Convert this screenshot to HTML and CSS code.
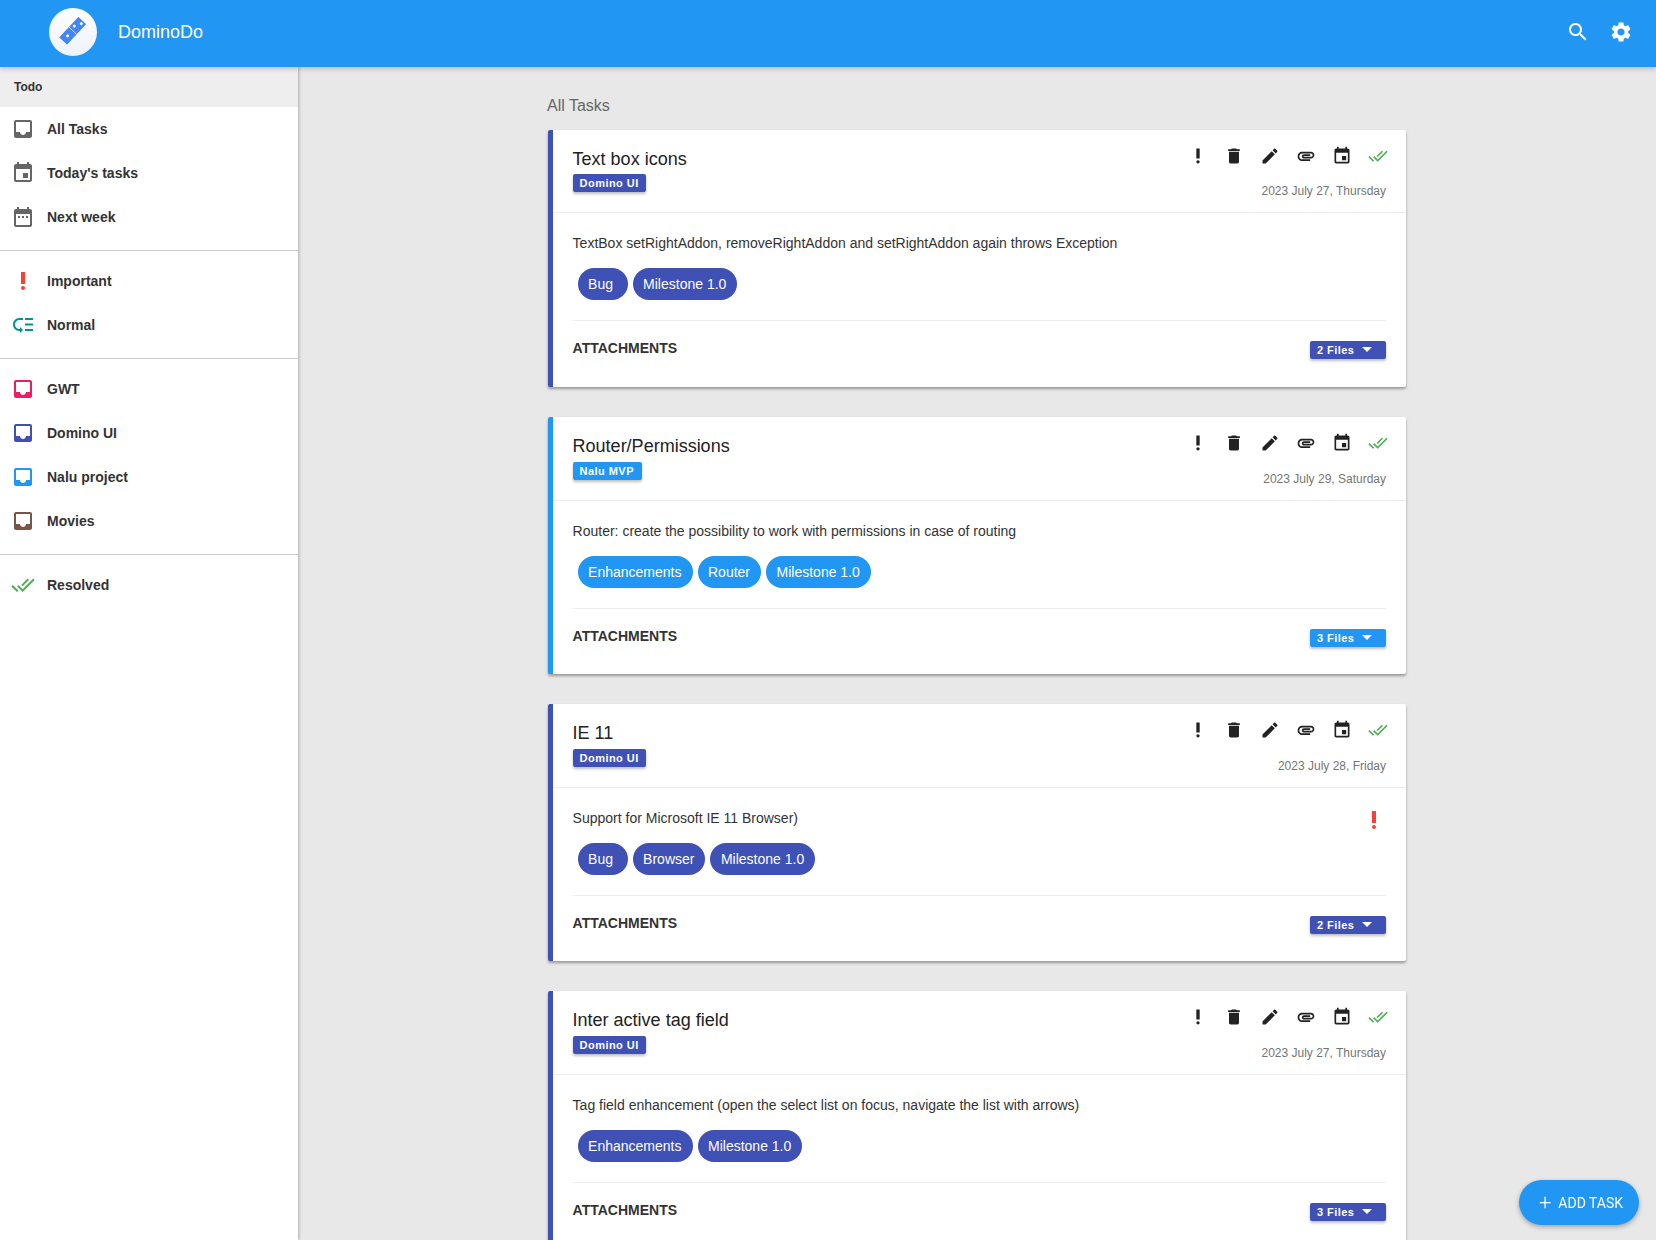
FILE: index.html
```html
<!DOCTYPE html>
<html lang="en">
<head>
  <meta charset="UTF-8">
  <meta name="viewport" content="width=device-width, initial-scale=1.0">
  <title>DominoDo</title>
  <link rel="stylesheet" href="styles.css">
</head>
<body>

  <svg class="icon-defs" aria-hidden="true">
    <symbol id="i-inbox" viewBox="0 0 24 24"><path d="M19 3H4.99c-1.11 0-1.98.89-1.98 2L3 19c0 1.1.88 2 1.99 2H19c1.1 0 2-.9 2-2V5c0-1.11-.9-2-2-2zm0 12h-4c0 1.66-1.35 3-3 3s-3-1.34-3-3H4.99V5H19v10z"/></symbol>
    <symbol id="i-event" viewBox="0 0 24 24"><path d="M17 12h-5v5h5v-5zM16 1v2H8V1H6v2H5c-1.11 0-1.99.9-1.99 2L3 19c0 1.1.89 2 2 2h14c1.1 0 2-.9 2-2V5c0-1.1-.9-2-2-2h-1V1h-2zm3 18H5V8h14v11z"/></symbol>
    <symbol id="i-range" viewBox="0 0 24 24"><path d="M9 11H7v2h2v-2zm4 0h-2v2h2v-2zm4 0h-2v2h2v-2zm2-7h-1V2h-2v2H8V2H6v2H5c-1.11 0-1.99.9-1.99 2L3 20c0 1.1.89 2 2 2h14c1.1 0 2-.9 2-2V6c0-1.1-.9-2-2-2zm0 16H5V9h14v11z"/></symbol>
    <symbol id="i-priority" viewBox="0 0 24 24"><circle cx="12" cy="19" r="2"/><path d="M10 3h4v12h-4z"/></symbol>
    <symbol id="i-low" viewBox="0 0 24 24"><path d="M14 5h8v2h-8zm0 5.5h8v2h-8zm0 5.5h8v2h-8zM2 11.5C2 15.08 4.92 18 8.5 18H9v2l3-3-3-3v2h-.5C6.02 16 4 13.98 4 11.5S6.02 7 8.5 7H12V5H8.5C4.92 5 2 7.92 2 11.5z"/></symbol>
    <symbol id="i-done" viewBox="0 0 24 24"><path d="M18 7l-1.41-1.41-6.34 6.34 1.41 1.41L18 7zm4.24-1.41L11.66 16.17 7.48 12l-1.41 1.41L11.66 19l12-12-1.42-1.41zM.41 13.41L6 19l1.41-1.41L1.83 12 .41 13.41z"/></symbol>
    <symbol id="i-delete" viewBox="0 0 24 24"><path d="M6 19c0 1.1.9 2 2 2h8c1.1 0 2-.9 2-2V7H6v12zM19 4h-3.5l-1-1h-5l-1 1H5v2h14V4z"/></symbol>
    <symbol id="i-edit" viewBox="0 0 24 24"><path d="M3 17.25V21h3.75L17.81 9.94l-3.75-3.75L3 17.25zM20.71 7.04c.39-.39.39-1.02 0-1.41l-2.34-2.34c-.39-.39-1.02-.39-1.41 0l-1.83 1.83 3.75 3.75 1.83-1.83z"/></symbol>
    <symbol id="i-attach" viewBox="0 0 24 24"><path d="M2 12.5C2 9.46 4.46 7 7.5 7H18c2.21 0 4 1.79 4 4s-1.79 4-4 4H9.5C8.12 15 7 13.88 7 12.5S8.12 10 9.5 10H17v2H9.41c-.55 0-.55 1 0 1H18c1.1 0 2-.9 2-2s-.9-2-2-2H7.5C5.57 9 4 10.57 4 12.5S5.57 16 7.5 16H17v2H7.5C4.46 18 2 15.54 2 12.5z"/></symbol>
    <symbol id="i-search" viewBox="0 0 24 24"><path d="M15.5 14h-.79l-.28-.27C15.41 12.59 16 11.11 16 9.5 16 5.91 13.09 3 9.5 3S3 5.91 3 9.5 5.91 16 9.5 16c1.61 0 3.09-.59 4.23-1.57l.27.28v.79l5 4.99L20.49 19l-4.99-5zm-6 0C7.01 14 5 11.99 5 9.5S7.01 5 9.5 5 14 7.01 14 9.5 11.99 14 9.5 14z"/></symbol>
    <symbol id="i-settings" viewBox="0 0 24 24"><path d="M19.14 12.94c.04-.3.06-.61.06-.94 0-.32-.02-.64-.07-.94l2.03-1.58c.18-.14.23-.41.12-.61l-1.92-3.32c-.12-.22-.37-.29-.59-.22l-2.39.96c-.5-.38-1.03-.7-1.62-.94l-.36-2.54c-.04-.24-.24-.41-.48-.41h-3.84c-.24 0-.43.17-.47.41l-.36 2.54c-.59.24-1.13.57-1.62.94l-2.39-.96c-.22-.08-.47 0-.59.22L2.74 8.87c-.12.21-.08.47.12.61l2.03 1.58c-.05.3-.09.63-.09.94s.02.64.07.94l-2.03 1.58c-.18.14-.23.41-.12.61l1.92 3.32c.12.22.37.29.59.22l2.39-.96c.5.38 1.03.7 1.62.94l.36 2.54c.05.24.24.41.48.41h3.84c.24 0 .44-.17.47-.41l.36-2.54c.59-.24 1.13-.56 1.62-.94l2.39.96c.22.08.47 0 .59-.22l1.92-3.32c.12-.22.07-.47-.12-.61l-2.01-1.58zM12 15.6c-1.98 0-3.6-1.62-3.6-3.6s1.62-3.6 3.6-3.6 3.6 1.62 3.6 3.6-1.62 3.6-3.6 3.6z"/></symbol>
  </svg>

  <header class="topbar">
    <div class="logo">
      <svg width="32" height="32" viewBox="0 0 32 32">
        <g transform="translate(-0.3 -1.3) rotate(-47 16 16)">
          <rect x="2" y="10.7" width="28" height="10.6" rx="0.5" fill="#4285f4"/>
          <rect x="15.7" y="10.7" width="0.6" height="10.6" fill="#dbe6fb"/>
          <circle cx="8.8" cy="15.8" r="1.5" fill="#fff"/>
          <circle cx="20.5" cy="14" r="1.5" fill="#fff"/>
          <circle cx="27" cy="17.5" r="1.5" fill="#fff"/>
        </g>
      </svg>
    </div>
    <div class="brand">DominoDo</div>
    <div class="topbar-actions">
      <svg class="icon white"><use href="#i-search"/></svg>
      <svg class="icon white"><use href="#i-settings"/></svg>
    </div>
  </header>

  <div class="layout">
    <nav class="sidebar">
      <div class="menu-title">Todo</div>
      <ul class="menu">
        <li><svg class="icon grey"><use href="#i-inbox"/></svg>All Tasks</li>
        <li><svg class="icon grey"><use href="#i-event"/></svg>Today's tasks</li>
        <li><svg class="icon grey"><use href="#i-range"/></svg>Next week</li>
      </ul>
      <ul class="menu">
        <li><svg class="icon red"><use href="#i-priority"/></svg>Important</li>
        <li><svg class="icon teal"><use href="#i-low"/></svg>Normal</li>
      </ul>
      <ul class="menu">
        <li><svg class="icon pink"><use href="#i-inbox"/></svg>GWT</li>
        <li><svg class="icon indigo"><use href="#i-inbox"/></svg>Domino UI</li>
        <li><svg class="icon blue"><use href="#i-inbox"/></svg>Nalu project</li>
        <li><svg class="icon brown"><use href="#i-inbox"/></svg>Movies</li>
      </ul>
      <ul class="menu menu-last">
        <li><svg class="icon green"><use href="#i-done"/></svg>Resolved</li>
      </ul>
    </nav>

    <main class="content">
      <div class="tasks">
        <div class="page-title">All Tasks</div>

        <div class="card indigo-card">
          <div class="card-head">
            <div>
              <div class="card-title">Text box icons</div>
              <span class="project">Domino UI</span>
            </div>
            <div class="card-meta">
              <div class="actions">
                <svg class="action dark"><use href="#i-priority"/></svg>
                <svg class="action dark"><use href="#i-delete"/></svg>
                <svg class="action dark"><use href="#i-edit"/></svg>
                <svg class="action dark"><use href="#i-attach"/></svg>
                <svg class="action dark"><use href="#i-event"/></svg>
                <svg class="action green"><use href="#i-done"/></svg>
              </div>
              <div class="due">2023 July 27, Thursday</div>
            </div>
          </div>
          <div class="card-body">
            <div class="desc">TextBox setRightAddon, removeRightAddon and setRightAddon again throws Exception</div>
            <div class="chips">
              <span class="chip">Bug</span>
              <span class="chip">Milestone 1.0</span>
            </div>
            <div class="attachments">
              <span>ATTACHMENTS</span>
              <span class="files">2 Files <i class="caret"></i></span>
            </div>
          </div>
        </div>

        <div class="card blue-card">
          <div class="card-head">
            <div>
              <div class="card-title">Router/Permissions</div>
              <span class="project">Nalu MVP</span>
            </div>
            <div class="card-meta">
              <div class="actions">
                <svg class="action dark"><use href="#i-priority"/></svg>
                <svg class="action dark"><use href="#i-delete"/></svg>
                <svg class="action dark"><use href="#i-edit"/></svg>
                <svg class="action dark"><use href="#i-attach"/></svg>
                <svg class="action dark"><use href="#i-event"/></svg>
                <svg class="action green"><use href="#i-done"/></svg>
              </div>
              <div class="due">2023 July 29, Saturday</div>
            </div>
          </div>
          <div class="card-body">
            <div class="desc">Router: create the possibility to work with permissions in case of routing</div>
            <div class="chips">
              <span class="chip">Enhancements</span>
              <span class="chip">Router</span>
              <span class="chip">Milestone 1.0</span>
            </div>
            <div class="attachments">
              <span>ATTACHMENTS</span>
              <span class="files">3 Files <i class="caret"></i></span>
            </div>
          </div>
        </div>

        <div class="card indigo-card">
          <div class="card-head">
            <div>
              <div class="card-title">IE 11</div>
              <span class="project">Domino UI</span>
            </div>
            <div class="card-meta">
              <div class="actions">
                <svg class="action dark"><use href="#i-priority"/></svg>
                <svg class="action dark"><use href="#i-delete"/></svg>
                <svg class="action dark"><use href="#i-edit"/></svg>
                <svg class="action dark"><use href="#i-attach"/></svg>
                <svg class="action dark"><use href="#i-event"/></svg>
                <svg class="action green"><use href="#i-done"/></svg>
              </div>
              <div class="due">2023 July 28, Friday</div>
            </div>
          </div>
          <div class="card-body">
            <div class="desc">Support for Microsoft IE 11 Browser)<svg class="icon red flag"><use href="#i-priority"/></svg></div>
            <div class="chips">
              <span class="chip">Bug</span>
              <span class="chip">Browser</span>
              <span class="chip">Milestone 1.0</span>
            </div>
            <div class="attachments">
              <span>ATTACHMENTS</span>
              <span class="files">2 Files <i class="caret"></i></span>
            </div>
          </div>
        </div>

        <div class="card indigo-card">
          <div class="card-head">
            <div>
              <div class="card-title">Inter active tag field</div>
              <span class="project">Domino UI</span>
            </div>
            <div class="card-meta">
              <div class="actions">
                <svg class="action dark"><use href="#i-priority"/></svg>
                <svg class="action dark"><use href="#i-delete"/></svg>
                <svg class="action dark"><use href="#i-edit"/></svg>
                <svg class="action dark"><use href="#i-attach"/></svg>
                <svg class="action dark"><use href="#i-event"/></svg>
                <svg class="action green"><use href="#i-done"/></svg>
              </div>
              <div class="due">2023 July 27, Thursday</div>
            </div>
          </div>
          <div class="card-body">
            <div class="desc">Tag field enhancement (open the select list on focus, navigate the list with arrows)</div>
            <div class="chips">
              <span class="chip">Enhancements</span>
              <span class="chip">Milestone 1.0</span>
            </div>
            <div class="attachments">
              <span>ATTACHMENTS</span>
              <span class="files">3 Files <i class="caret"></i></span>
            </div>
          </div>
        </div>
      </div>
    </main>
  </div>

  <button class="fab"><span class="fab-plus">+</span>ADD TASK</button>

</body>
</html>
```

FILE: styles.css
```css
* {
  box-sizing: border-box;
}

body {
  font-family: "Liberation Sans", Arial, sans-serif;
  background-color: #e8e8e8;
  color: #333;
  margin: 0;
  height: 100vh;
  overflow: hidden;
  display: flex;
  flex-direction: column;
}

.icon-defs {
  display: none;
}

.icon {
  width: 24px;
  height: 24px;
  flex: none;
  fill: currentColor;
}

.white { color: #fff; }
.grey { color: #666; }
.dark { color: #222; }
.red { color: #f44336; }
.teal { color: #009688; }
.pink { color: #e91e63; }
.indigo { color: #3f51b5; }
.blue { color: #2196f3; }
.brown { color: #795548; }
.green { color: #4caf50; }

/* top bar */
.topbar {
  height: 67px;
  flex: none;
  background-color: #2196f3;
  color: #fff;
  display: flex;
  align-items: center;
  padding: 0 0 3px 49px;
  position: relative;
  z-index: 2;
  box-shadow: 0 2px 5px rgba(0, 0, 0, 0.2);
}

.logo {
  width: 48px;
  height: 48px;
  border-radius: 50%;
  background: linear-gradient(#fff, #eef2fa);
  display: flex;
  align-items: center;
  justify-content: center;
}

.brand {
  font-size: 18px;
  margin-left: 21px;
}

.topbar-actions {
  margin-left: auto;
  margin-right: 23px;
  display: flex;
  gap: 19px;
}

/* sidebar */
.layout {
  flex: 1;
  display: flex;
  min-height: 0;
}

.sidebar {
  width: 298px;
  flex: none;
  background-color: #fff;
  box-shadow: 1px 0 3px rgba(0, 0, 0, 0.25);
  position: relative;
  z-index: 1;
}

.menu-title {
  height: 40px;
  line-height: 40px;
  padding-left: 14px;
  font-size: 12px;
  font-weight: bold;
  background-color: #eee;
}

.menu {
  list-style: none;
  margin: 0;
  padding: 0 0 11px;
  border-bottom: 1px solid #ccc;
}

.menu + .menu {
  padding-top: 8px;
}

.menu-last {
  border-bottom: none;
}

.menu li {
  height: 44px;
  display: flex;
  align-items: center;
  padding-left: 11px;
  gap: 12px;
  font-size: 14px;
  font-weight: bold;
}

/* task list */
.content {
  flex: 1;
  min-width: 0;
}

.tasks {
  width: 858px;
  margin: 0 auto;
}

.page-title {
  height: 63px;
  padding-top: 29px;
  margin-left: -1px;
  font-size: 16px;
  line-height: 19px;
  color: #666;
}

.card {
  background-color: #fff;
  height: 257px;
  margin-bottom: 30px;
  border-left: 5px solid #3f51b5;
  border-radius: 2px;
  box-shadow: 0 2px 3px rgba(0, 0, 0, 0.35);
}

.blue-card {
  border-left-color: #2196f3;
}

.card-head {
  height: 84px;
  padding: 16px 20px 0 19.6px;
  border-bottom: 1px solid #eee;
  display: flex;
  justify-content: space-between;
}

.page-title + .card .card-head {
  height: 83px;
}

.card-title {
  font-size: 18px;
  line-height: 22px;
  color: #222;
  margin-top: 2px;
  margin-bottom: 5px;
}

.page-title + .card .card-title {
  margin-bottom: 4px;
}

.project,
.files {
  height: 18px;
  line-height: 18px;
  padding: 0 7px;
  font-size: 11px;
  font-weight: bold;
  letter-spacing: 0.45px;
  color: #fff;
  background-color: #3f51b5;
  border-radius: 2px;
  box-shadow: 0 2px 3px rgba(0, 0, 0, 0.25);
}

.project {
  display: block;
  width: fit-content;
  padding-right: 7.6px;
}

.blue-card .project,
.blue-card .files,
.blue-card .chip {
  background-color: #2196f3;
}

.card-meta {
  text-align: right;
}

.actions {
  display: flex;
  gap: 16px;
  margin-right: -2px;
}

.action {
  width: 20px;
  height: 20px;
  flex: none;
  fill: currentColor;
}

.due {
  font-size: 12px;
  line-height: 14px;
  color: #757575;
  margin-top: 19px;
}

.page-title + .card .due {
  margin-top: 18px;
}

.card-body {
  padding: 0 20px 0 19.6px;
}

.desc {
  font-size: 14px;
  line-height: 20px;
  height: 55px;
  padding-top: 20px;
  display: flex;
  justify-content: space-between;
}

.flag {
  flex: none;
}

.chips {
  display: flex;
  gap: 5px;
  padding-left: 5px;
}

.chip {
  height: 32px;
  line-height: 32px;
  min-width: 50px;
  padding: 0 11px 0 10.5px;
  border-radius: 16px;
  font-size: 14px;
  color: #fff;
  background-color: #3f51b5;
}

.attachments {
  margin-top: 20px;
  border-top: 1px solid #eee;
  padding-top: 19px;
  display: flex;
  justify-content: space-between;
  align-items: flex-start;
  font-size: 14px;
  line-height: 17px;
  font-weight: bold;
}

.files {
  width: 76px;
  margin-top: 1px;
}

.caret {
  display: inline-block;
  width: 0;
  height: 0;
  margin-left: 4px;
  vertical-align: 2px;
  border-left: 5px solid transparent;
  border-right: 5px solid transparent;
  border-top: 5px solid #fff;
}

.fab {
  position: fixed;
  left: 1519px;
  top: 1180px;
  width: 120px;
  height: 45px;
  border: none;
  border-radius: 23px;
  background-color: #2196f3;
  color: #fff;
  font-family: Roboto, Arial, sans-serif;
  font-size: 14px;
  box-shadow: 0 2px 5px rgba(0, 0, 0, 0.3);
  z-index: 3;
  display: flex;
  align-items: center;
  justify-content: center;
  padding: 0 0 0 4px;
}

.fab-plus {
  font-size: 22px;
  font-weight: 300;
  line-height: 22px;
  margin-right: 7px;
}
```
